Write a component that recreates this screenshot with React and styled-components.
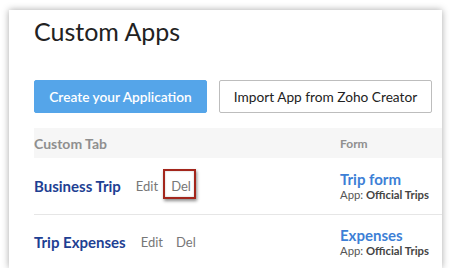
import React from "react";
import styled, { createGlobalStyle } from "styled-components";

const Global = createGlobalStyle`
  html, body { margin: 0; padding: 0; background: #fff; }
  body { font-family: Lato, "Open Sans", sans-serif; }
`;

const Card = styled.div`
  margin: 10px 0 0 9px;
  width: 433px;
  height: 258px;
  background: #fff;
  box-shadow: 0 0 7px rgba(0,0,0,0.35);
  padding-left: 25px;
  box-sizing: border-box;
  overflow: hidden;
`;

const Title = styled.h1`
  margin: 0;
  padding-top: 6px;
  font-size: 25px;
  font-weight: 400;
  color: #222;
  line-height: 30px;
`;

const Actions = styled.div`
  display: flex;
  gap: 12px;
  margin-top: 34px;
`;

const Button = styled.button`
  height: 33px;
  box-sizing: border-box;
  font-family: inherit;
  font-size: 13.7px;
  border-radius: 2px;
  padding: 0;
  white-space: nowrap;
  text-align: center;
  width: ${p => p.$w}px;
  background: ${p => (p.$primary ? "#55a5e9" : "#fff")};
  color: ${p => (p.$primary ? "#fff" : "#222")};
  border: 1px solid ${p => (p.$primary ? "#55a5e9" : "#bdbdbd")};
  font-weight: ${p => (p.$primary ? 600 : 400)};
`;

const Table = styled.div`
  margin-top: 15px;
`;

const Row = styled.div`
  display: grid;
  grid-template-columns: 306px 1fr;
  align-items: center;
  height: ${p => p.$h}px;
  background: ${p => (p.$head ? "#f6f6f6" : "transparent")};
  border-bottom: ${p => (p.$line ? "1px solid #e6e6e6" : "none")};
`;

const HeadCell = styled.div`
  color: #8f8f8f;
  font-weight: 700;
  font-size: ${p => p.$size}px;
`;

const TabCell = styled.div`
  display: flex;
  align-items: center;
`;

const TabName = styled.span`
  color: #1e3f93;
  font-weight: 700;
  font-size: 15px;
  margin-right: 15px;
`;

const Link = styled.span`
  position: relative;
  color: #777;
  font-size: 13px;
  margin-right: 13px;
`;

const Highlight = styled.span`
  position: absolute;
  left: -8px;
  top: -9px;
  width: 33px;
  height: 30px;
  box-sizing: border-box;
  border: 2px solid #a3261c;
  box-shadow: 1px 2px 3px rgba(0,0,0,0.45), inset 0 0 2px rgba(0,0,0,0.25);
`;

const FormCell = styled.div`
  display: flex;
  flex-direction: column;
`;

const FormName = styled.span`
  color: #3d7fd6;
  font-weight: 700;
  font-size: 15px;
  line-height: 17px;
`;

const AppLine = styled.span`
  color: #555;
  font-size: 11.3px;
  line-height: 14px;
  b { font-weight: 700; color: #444; }
`;

const rows = [
  { tab: "Business Trip", form: "Trip form", hl: true },
  { tab: "Trip Expenses", form: "Expenses", hl: false },
];

export default function App() {
  return (
    <>
      <Global />
      <Card>
        <Title>Custom Apps</Title>
        <Actions>
          <Button $primary $w={173}>Create your Application</Button>
          <Button $w={213}>Import App from Zoho Creator</Button>
        </Actions>
        <Table>
          <Row $head $h={30}>
            <HeadCell $size={14}>Custom Tab</HeadCell>
            <HeadCell $size={12}>Form</HeadCell>
          </Row>
          {rows.map((r, i) => (
            <Row key={r.tab} $h={i === 0 ? 56 : 54} $line={i === 0}>
              <TabCell>
                <TabName>{r.tab}</TabName>
                <Link>Edit</Link>
                <Link>
                  Del
                  {r.hl && <Highlight />}
                </Link>
              </TabCell>
              <FormCell>
                <FormName>{r.form}</FormName>
                <AppLine>App: <b>Official Trips</b></AppLine>
              </FormCell>
            </Row>
          ))}
        </Table>
      </Card>
    </>
  );
}
